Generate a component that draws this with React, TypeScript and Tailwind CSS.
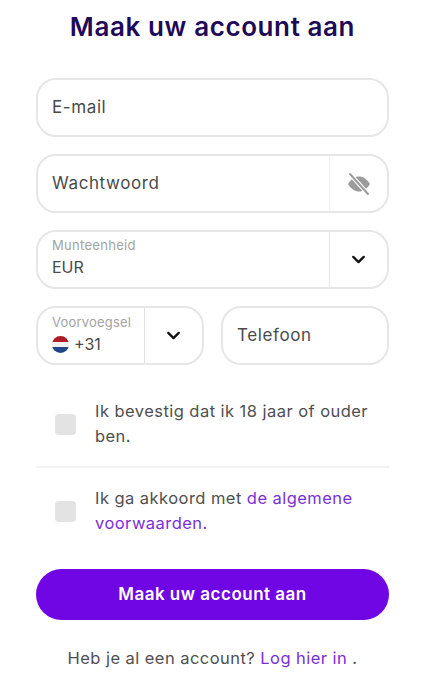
import React from 'react';
import { ChevronDown } from 'lucide-react';

const field = 'h-[59px] rounded-[20px] border-2 border-[#e6e6e6] bg-white flex items-stretch overflow-hidden';

function Field({ label }: { label: string }) {
  return (
    <div className={field}>
      <span className="flex-1 flex items-center pl-[14px] text-[17px] tracking-[0.6px] text-[#4a4a4a]">{label}</span>
    </div>
  );
}

function Chevron() {
  return <ChevronDown className="h-[21px] w-[21px] text-[#111]" strokeWidth={2.6} />;
}

function EyeOff() {
  return (
    <svg width="24" height="22" viewBox="0 0 24 22" className="shrink-0">
      <path d="M1 11C4 6 8 3.5 12 3.5S20 6 23 11c-3 5-7 7.500-11 7.500S4 16 1 11Z" fill="#9c9c9c" />
      <circle cx="12" cy="11" r="2.200" fill="#c4c4c4" />
      <path d="M3 1l18 20" stroke="#ffffff" strokeWidth="4.200" />
      <path d="M3 1l18 20" stroke="#9c9c9c" strokeWidth="2" strokeLinecap="round" />
    </svg>
  );
}

function NlFlag() {
  return (
    <svg width="17" height="17" viewBox="0 0 17 17" className="shrink-0">
      <defs>
        <clipPath id="flag-circle">
          <circle cx="8.500" cy="8.500" r="8.500" />
        </clipPath>
      </defs>
      <g clipPath="url(#flag-circle)">
        <rect width="17" height="6" fill="#ae1c28" />
        <rect y="6" width="17" height="5" fill="#f0f0f0" />
        <rect y="11" width="17" height="6" fill="#21468b" />
      </g>
    </svg>
  );
}

function Check({ children }: { children: React.ReactNode }) {
  return (
    <div className="flex items-center pl-[19px] pr-[12px]">
      <span className="h-[21px] w-[21px] shrink-0 rounded-[4px] bg-[#e3e3e3]" />
      <p className="ml-[19px] text-[16.5px] leading-[25px] tracking-[0.45px] text-[#4f4f4f]">{children}</p>
    </div>
  );
}

export default function App() {
  return (
    <div className="w-[440px] h-[700px] bg-white font-['Inter',sans-serif] pl-[36px] pr-[51px]">
      <h1 className="pt-[10px] h-[78px] text-center text-[26px] leading-[34px] tracking-[0.6px] font-semibold text-[#1f0a57]">
        Maak uw account aan
      </h1>

      <div className="flex flex-col gap-[17px]">
        <Field label="E-mail" />

        <div className={field}>
          <span className="flex-1 flex items-center pl-[14px] text-[17px] tracking-[0.6px] text-[#4a4a4a]">Wachtwoord</span>
          <div className="w-[58px] flex items-center justify-center border-l border-[#f1f1f1]">
            <EyeOff />
          </div>
        </div>

        <div className={field}>
          <div className="flex-1 flex flex-col justify-center pl-[14px] pb-[5px]">
            <span className="text-[13px] leading-[16px] tracking-[0.3px] text-[#a3a3a3]">Munteenheid</span>
            <span className="mt-[4px] text-[16px] leading-[21px] text-[#4a4a4a]">EUR</span>
          </div>
          <div className="w-[58px] flex items-center justify-center border-l border-[#e6e6e6] pb-[1px]">
            <Chevron />
          </div>
        </div>

        <div className="grid grid-cols-2 gap-[17px]">
          <div className={field}>
            <div className="flex-1 flex flex-col justify-center pl-[14px] pb-[2px]">
              <span className="text-[13px] leading-[16px] tracking-[0.2px] text-[#a3a3a3]">Voorvoegsel</span>
              <span className="mt-[3px] flex items-center gap-[5px] text-[16px] leading-[22px] text-[#4a4a4a]">
                <NlFlag />
                +31
              </span>
            </div>
            <div className="w-[58px] flex items-center justify-center border-l border-[#e0e0e0] pb-[1px]">
              <Chevron />
            </div>
          </div>
          <Field label="Telefoon" />
        </div>
      </div>

      <div className="mt-[34px]">
        <Check>Ik bevestig dat ik 18 jaar of ouder ben.</Check>
      </div>
      <div className="mt-[17px] mb-[18px] h-[2px] bg-[#f1f1f1]" />
      <Check>
        Ik ga akkoord met <a className="text-[#7a2fd6]">de algemene voorwaarden.</a>
      </Check>

      <button className="mt-[33px] h-[51px] w-full rounded-full bg-[#6f06e3] text-[17px] tracking-[0.5px] font-semibold text-white">
        Maak uw account aan
      </button>

      <p className="mt-[26px] text-center text-[16.5px] leading-[24px] tracking-[0.45px] text-[#4f4f4f]">
        Heb je al een account? <a className="text-[#7a2fd6]">Log hier in</a> .
      </p>
    </div>
  );
}
